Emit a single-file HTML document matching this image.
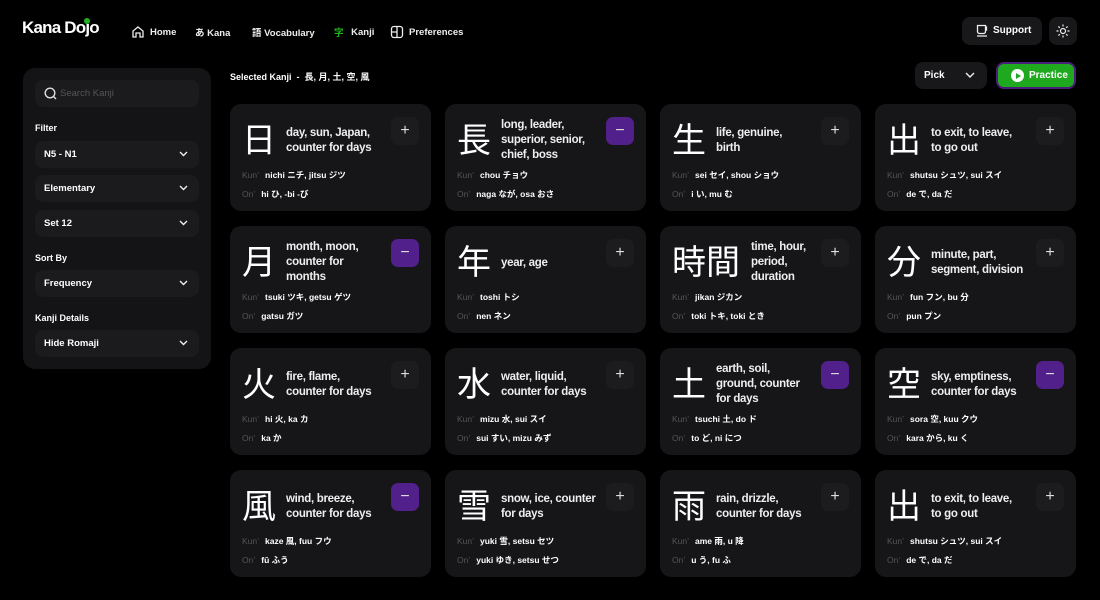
<!DOCTYPE html>
<html><head><meta charset="utf-8">
<style>
*{box-sizing:border-box;margin:0;padding:0}
body{width:1100px;height:600px;background:#000;color:#fff;font-family:"Liberation Sans","Noto Sans CJK JP",sans-serif;position:relative;overflow:hidden}
.abs{position:absolute}
.nav{font-size:9.5px;font-weight:bold;top:25px;display:flex;align-items:center;gap:5px;color:#eee}
.side{left:23px;top:68px;width:188px;height:301px;background:#141316;border-radius:12px}
.dd{position:absolute;left:12px;width:164px;height:27px;background:#1b1a1d;border-radius:8px;font-size:9.5px;font-weight:bold;padding-left:9px;line-height:27px}
.dd svg{position:absolute;right:11px;top:10px}
.lbl{position:absolute;left:12px;font-size:9px;font-weight:bold}
.card{position:absolute;width:201px;height:107px;background:#161518;border-radius:11px}
.k{position:absolute;left:12px;top:14px;font-size:34px;line-height:40px;font-family:"Noto Sans CJK JP",sans-serif}
.m{position:absolute;font-size:11.5px;line-height:15px;font-weight:bold;color:#eee;letter-spacing:-0.3px}
.b{position:absolute;left:161px;top:13px;width:28px;height:28px;border-radius:7px;background:#1c1b1e;color:#ddd;text-align:center;line-height:27px;font-size:16px}
.b.on{background:#52208a}
.r{position:absolute;left:12px;font-size:8.5px;font-weight:bold;white-space:nowrap}
.r span{color:#555;font-weight:normal;margin-right:6px}
</style></head><body>
<div class="abs" style="left:22px;top:18px;font-size:17px;font-weight:bold;letter-spacing:-0.8px">Kana Dojo</div>
<div class="abs" style="left:84px;top:18px;width:6px;height:6px;border-radius:50%;background:#22b322"></div>
<div class="abs nav" style="left:131px"><svg width="14" height="14" viewBox="0 0 14 14" fill="none" stroke="#eee" stroke-width="1.3"><path d="M2 12V6l5-4 5 4v6H9V8H5v4z"/></svg>Home</div>
<div class="abs nav" style="left:195px">あ&nbsp;Kana</div>
<div class="abs nav" style="left:252px">語&nbsp;Vocabulary</div>
<div class="abs nav" style="left:334px"><span style="color:#22b322">字</span>&nbsp;Kanji</div>
<div class="abs nav" style="left:390px"><svg width="14" height="14" viewBox="0 0 14 14" fill="none" stroke="#eee" stroke-width="1.3"><rect x="1.5" y="1.5" width="11" height="11" rx="2.5"/><path d="M7 1.5v11M1.5 7h5.5"/></svg>Preferences</div>
<div class="abs" style="left:962px;top:17px;width:80px;height:28px;background:#18171a;border-radius:8px;font-size:10px;font-weight:bold;line-height:28px;padding-left:31px">Support</div>
<svg class="abs" style="left:976px;top:24px" width="12" height="13" viewBox="0 0 12 13" fill="none" stroke="#eee" stroke-width="1.3"><path d="M1.5 1.5h8v6a2 2 0 0 1-2 2h-4a2 2 0 0 1-2-2zM1 12h10M9.5 3h1v3h-1"/></svg>
<div class="abs" style="left:1049px;top:17px;width:28px;height:28px;background:#18171a;border-radius:8px"></div>
<svg class="abs" style="left:1056px;top:24px" width="14" height="14" viewBox="0 0 14 14" fill="none" stroke="#eee" stroke-width="1.2"><circle cx="7" cy="7" r="2.5"/><path d="M7 0.5v2M7 11.5v2M0.5 7h2M11.5 7h2M2.4 2.4l1.4 1.4M10.2 10.2l1.4 1.4M2.4 11.6l1.4-1.4M10.2 3.8l1.4-1.4"/></svg>
<div class="abs" style="left:915px;top:62px;width:72px;height:27px;background:#18171a;border-radius:8px;font-size:10px;font-weight:bold;line-height:27px;padding-left:9px">Pick</div>
<svg class="abs" style="left:965px;top:72px" width="10" height="6" viewBox="0 0 10 6" fill="none" stroke="#eee" stroke-width="1.4"><path d="M1 1l4 4 4-4"/></svg>
<div class="abs" style="left:996px;top:62px;width:80px;height:27px;background:#1fa91f;border:2px solid #4a1f7a;border-radius:8px;font-size:10px;font-weight:bold;line-height:23px;padding-left:31px">Practice</div>
<div class="abs" style="left:1011px;top:69px;width:13px;height:13px;border-radius:50%;background:#fff"></div>
<div class="abs" style="left:1016px;top:72.5px;width:0;height:0;border-left:5px solid #1fa91f;border-top:3px solid transparent;border-bottom:3px solid transparent"></div>
<div class="abs" style="left:230px;top:70px;font-size:9px;font-weight:bold">Selected Kanji&nbsp; - &nbsp;長, 月, 土, 空, 風</div>

<div class="abs side">
<div class="dd" style="top:12px;color:#555;font-weight:normal;padding-left:25px">Search Kanji</div>
<svg class="abs" style="left:21px;top:19px" width="13" height="13" viewBox="0 0 13 13" fill="none" stroke="#ddd" stroke-width="1.4"><circle cx="6" cy="6" r="4.8"/><path d="M9.5 9.5l2.5 2.5"/></svg>
<div class="lbl" style="top:55px">Filter</div>
<div class="dd" style="top:73px">N5 - N1<svg width="9" height="6" viewBox="0 0 9 6" fill="none" stroke="#eee" stroke-width="1.4"><path d="M1 1l3.5 3.5L8 1"/></svg></div>
<div class="dd" style="top:107px">Elementary<svg width="9" height="6" viewBox="0 0 9 6" fill="none" stroke="#eee" stroke-width="1.4"><path d="M1 1l3.5 3.5L8 1"/></svg></div>
<div class="dd" style="top:142px">Set 12<svg width="9" height="6" viewBox="0 0 9 6" fill="none" stroke="#eee" stroke-width="1.4"><path d="M1 1l3.5 3.5L8 1"/></svg></div>
<div class="lbl" style="top:185px">Sort By</div>
<div class="dd" style="top:202px">Frequency<svg width="9" height="6" viewBox="0 0 9 6" fill="none" stroke="#eee" stroke-width="1.4"><path d="M1 1l3.5 3.5L8 1"/></svg></div>
<div class="lbl" style="top:245px">Kanji Details</div>
<div class="dd" style="top:262px">Hide Romaji<svg width="9" height="6" viewBox="0 0 9 6" fill="none" stroke="#eee" stroke-width="1.4"><path d="M1 1l3.5 3.5L8 1"/></svg></div>
</div>

<div id="g"></div>
<script>
var d=[
["日","day, sun, Japan,<br>counter for days",0,"nichi ニチ, jitsu ジツ","hi ひ, -bi -び",2],
["長","long, leader,<br>superior, senior,<br>chief, boss",1,"chou チョウ","naga なが, osa おさ",3],
["生","life, genuine,<br>birth",0,"sei セイ, shou ショウ","i い, mu む",2],
["出","to exit, to leave,<br>to go out",0,"shutsu シュツ, sui スイ","de で, da だ",2],
["月","month, moon,<br>counter for<br>months",1,"tsuki ツキ, getsu ゲツ","gatsu ガツ",3],
["年","year, age",0,"toshi トシ","nen ネン",1],
["時間","time, hour,<br>period,<br>duration",0,"jikan ジカン","toki トキ, toki とき",3],
["分","minute, part,<br>segment, division",0,"fun フン, bu 分","pun プン",2],
["火","fire, flame,<br>counter for days",0,"hi 火, ka カ","ka か",2],
["水","water, liquid,<br>counter for days",0,"mizu 水, sui スイ","sui すい, mizu みず",2],
["土","earth, soil,<br>ground, counter<br>for days",1,"tsuchi 土, do ド","to ど, ni につ",3],
["空","sky, emptiness,<br>counter for days",1,"sora 空, kuu クウ","kara から, ku く",2],
["風","wind, breeze,<br>counter for days",1,"kaze 風, fuu フウ","fū ふう",2],
["雪","snow, ice, counter<br>for days",0,"yuki 雪, setsu セツ","yuki ゆき, setsu せつ",2],
["雨","rain, drizzle,<br>counter for days",0,"ame 雨, u 降","u う, fu ふ",2],
["出","to exit, to leave,<br>to go out",0,"shutsu シュツ, sui スイ","de で, da だ",2]];
var h="";
d.forEach(function(c,i){
var x=230+(i%4)*215,y=104+Math.floor(i/4)*122;
var mt=[0,30,22,14][c[5]];
var ml=c[0].length>1?91:56;
h+='<div class="card" style="left:'+x+'px;top:'+y+'px"><div class="k">'+c[0]+'</div><div class="m" style="left:'+ml+'px;top:'+mt+'px;white-space:nowrap">'+c[1]+'</div><div class="b'+(c[2]?' on':'')+'">'+(c[2]?'−':'+')+'</div><div class="r" style="top:65px"><span>Kun’</span>'+c[3]+'</div><div class="r" style="top:84px"><span>On’</span>'+c[4]+'</div></div>';
});
document.getElementById("g").innerHTML=h;
</script>
</body></html>
